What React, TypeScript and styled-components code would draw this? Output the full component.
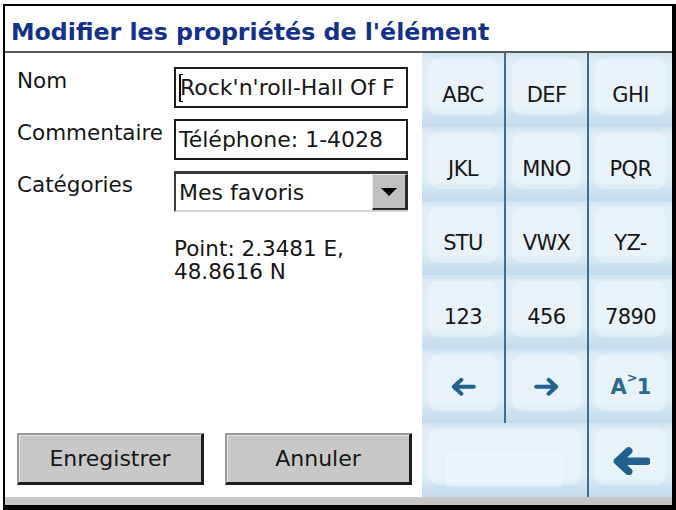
import styled, { createGlobalStyle } from "styled-components";

const GlobalStyle = createGlobalStyle`
  html, body {
    margin: 0;
    padding: 0;
    background: #ffffff;
  }
  body {
    font-family: "DejaVu Sans", Tahoma, sans-serif;
  }
`;

const colors = {
  ink: "#161616",
  title: "#12308e",
  keyBlue: "#1f6290",
  divider: "#3b6f8e",
  face: "#c8c8c8",
};

const Frame = styled.div`
  box-sizing: border-box;
  margin: 4px 0 0 3px;
  width: 673px;
  height: 506px;
  border-style: solid;
  border-color: #000;
  border-width: 2px 4px 5px 2px;
  display: flex;
  flex-direction: column;
  overflow: hidden;
`;

const TitleBar = styled.div`
  box-sizing: border-box;
  height: 47px;
  padding: 7px 0 0 6px;
  display: flex;
  align-items: center;
  border-bottom: 2px solid #5a5a5a;
  background: #fff;
`;

const Title = styled.h1`
  margin: 0;
  font-size: 23.7px;
  font-weight: bold;
  color: ${colors.title};
  white-space: nowrap;
`;

const Body = styled.div`
  flex: 1;
  display: flex;
  min-height: 0;
`;

const FormPanel = styled.div`
  box-sizing: border-box;
  width: 417px;
  padding: 14px 10px 12px 12px;
  display: flex;
  flex-direction: column;
  background: #fff;
`;

const FieldGrid = styled.div`
  display: grid;
  grid-template-columns: 145px 234px;
  column-gap: 12px;
  row-gap: 11px;
  align-items: start;
`;

const Label = styled.div`
  font-size: 21.5px;
  color: ${colors.ink};
  padding-top: 1px;
  white-space: nowrap;
  overflow: hidden;
`;

const TextBox = styled.div`
  box-sizing: border-box;
  height: 41px;
  border: 2px solid #1a1a1a;
  background: #fff;
  padding: 0 3px;
  display: flex;
  align-items: center;
  font-size: 22px;
  color: ${colors.ink};
  white-space: nowrap;
  overflow: hidden;
`;

const Caret = styled.span`
  box-sizing: border-box;
  width: 4px;
  height: 28px;
  border-left: 2px solid #000;
  border-top: 1px solid #000;
  border-bottom: 1px solid #000;
  margin-right: -3px;
  flex-shrink: 0;
`;

const ComboBox = styled.div`
  box-sizing: border-box;
  height: 41px;
  display: flex;
  border-style: solid;
  border-width: 3px 0 2px 2px;
  border-color: #3a3a3a #d4d4d4 #d4d4d4 #3a3a3a;
  background: #fff;
`;

const ComboValue = styled.div`
  flex: 1;
  display: flex;
  align-items: center;
  padding-left: 3px;
  font-size: 22px;
  color: ${colors.ink};
  white-space: nowrap;
`;

const ComboButton = styled.div`
  box-sizing: border-box;
  width: 36px;
  background: #c0c0c0;
  border-style: solid;
  border-width: 1px 3px 2px 1px;
  border-color: #e6e6e6 #2a2a2a #2a2a2a #e6e6e6;
  display: flex;
  align-items: center;
  justify-content: center;
`;

const DownTriangle = styled.span`
  width: 0;
  height: 0;
  border-left: 8px solid transparent;
  border-right: 8px solid transparent;
  border-top: 8px solid #000;
`;

const PointText = styled.div`
  grid-column: 2;
  margin-top: 14px;
  font-size: 21.5px;
  line-height: 23px;
  color: ${colors.ink};
`;

const ButtonRow = styled.div`
  margin-top: auto;
  display: flex;
  gap: 21px;
`;

const DialogButton = styled.button`
  box-sizing: border-box;
  width: 188px;
  height: 52px;
  margin: 0;
  padding: 0;
  background: ${colors.face};
  border-style: solid;
  border-width: 2px 3px 3px 2px;
  border-color: #9a9a9a #1c1c1c #1c1c1c #9a9a9a;
  box-shadow: inset 1px 1px 0 #e2e2e2;
  font-family: inherit;
  font-size: 22px;
  color: ${colors.ink};
`;

const Keypad = styled.div`
  width: 250px;
  display: grid;
  grid-template-columns: 84px 83px 83px;
  grid-template-rows: repeat(6, 1fr);
  background: #d6e8f4;
`;

const Key = styled.div<{ $last?: boolean; $span?: number; $icon?: boolean }>`
  box-sizing: border-box;
  position: relative;
  grid-column: span ${(p) => p.$span ?? 1};
  border-right: ${(p) => (p.$last ? "none" : `2px solid ${colors.divider}`)};
  background: linear-gradient(
    to bottom,
    #d0e4f1 0%,
    #e0edf6 10%,
    #dfedf6 72%,
    #cde2ef 86%,
    #c3dbec 100%
  );
  padding-top: ${(p) => (p.$icon ? "2px" : "10px")};
  display: flex;
  align-items: center;
  justify-content: center;
  font-size: 21px;
  color: ${colors.ink};

  &::before {
    content: "";
    position: absolute;
    left: 6px;
    right: 6px;
    top: 6px;
    bottom: 12px;
    border-radius: 10px;
    background: rgba(255, 255, 255, 0.3);
  }
`;

const KeyLabel = styled.span`
  position: relative;
  letter-spacing: -0.6px;
`;

const SpaceInner = styled.span`
  position: absolute;
  left: 24px;
  right: 24px;
  top: 28px;
  bottom: 10px;
  border-radius: 4px;
  background: rgba(255, 255, 255, 0.25);
`;

const CaseToggle = styled.span`
  position: relative;
  font-weight: bold;
  font-size: 21px;
  color: #2b6b8e;
  display: flex;
  align-items: flex-start;
  letter-spacing: -1px;

  sup {
    font-size: 13px;
    line-height: 1;
    margin: -4px 0 0 1px;
  }
`;

const BottomBar = styled.div`
  height: 8px;
  background: #c6c6c6;
`;

const Arrow = ({ dir, size = 26, weight = 3.6 }: { dir: "left" | "right"; size?: number; weight?: number }) => (
  <svg
    width={size}
    height={size * 0.75}
    viewBox="0 0 24 18"
    style={{ position: "relative", transform: dir === "right" ? "scaleX(-1)" : undefined }}
  >
    <path
      d="M22 9H4M10.5 2.5L3.5 9l7 6.5"
      fill="none"
      stroke={colors.keyBlue}
      strokeWidth={weight}
      strokeLinecap="round"
      strokeLinejoin="round"
    />
  </svg>
);

const letterKeys = ["ABC", "DEF", "GHI", "JKL", "MNO", "PQR", "STU", "VWX", "YZ-", "123", "456", "7890"];

export default function App() {
  return (
    <>
      <GlobalStyle />
      <Frame>
        <TitleBar>
          <Title>Modifier les propriétés de l'élément</Title>
        </TitleBar>
        <Body>
          <FormPanel>
            <FieldGrid>
              <Label>Nom</Label>
              <TextBox>
                <Caret />
                Rock'n'roll-Hall Of F
              </TextBox>
              <Label>Commentaire</Label>
              <TextBox>Téléphone: 1-4028</TextBox>
              <Label>Catégories</Label>
              <ComboBox>
                <ComboValue>Mes favoris</ComboValue>
                <ComboButton>
                  <DownTriangle />
                </ComboButton>
              </ComboBox>
              <PointText>
                Point: 2.3481 E,
                <br />
                48.8616 N
              </PointText>
            </FieldGrid>
            <ButtonRow>
              <DialogButton>Enregistrer</DialogButton>
              <DialogButton>Annuler</DialogButton>
            </ButtonRow>
          </FormPanel>
          <Keypad>
            {letterKeys.map((k, i) => (
              <Key key={k} $last={i % 3 === 2}>
                <KeyLabel>{k}</KeyLabel>
              </Key>
            ))}
            <Key $icon>
              <Arrow dir="left" />
            </Key>
            <Key $icon>
              <Arrow dir="right" />
            </Key>
            <Key $last $icon>
              <CaseToggle>
                A<sup>&gt;</sup>1
              </CaseToggle>
            </Key>
            <Key $span={2}>
              <SpaceInner />
            </Key>
            <Key $last $icon>
              <Arrow dir="left" size={38} weight={4.8} />
            </Key>
          </Keypad>
        </Body>
        <BottomBar />
      </Frame>
    </>
  );
}
